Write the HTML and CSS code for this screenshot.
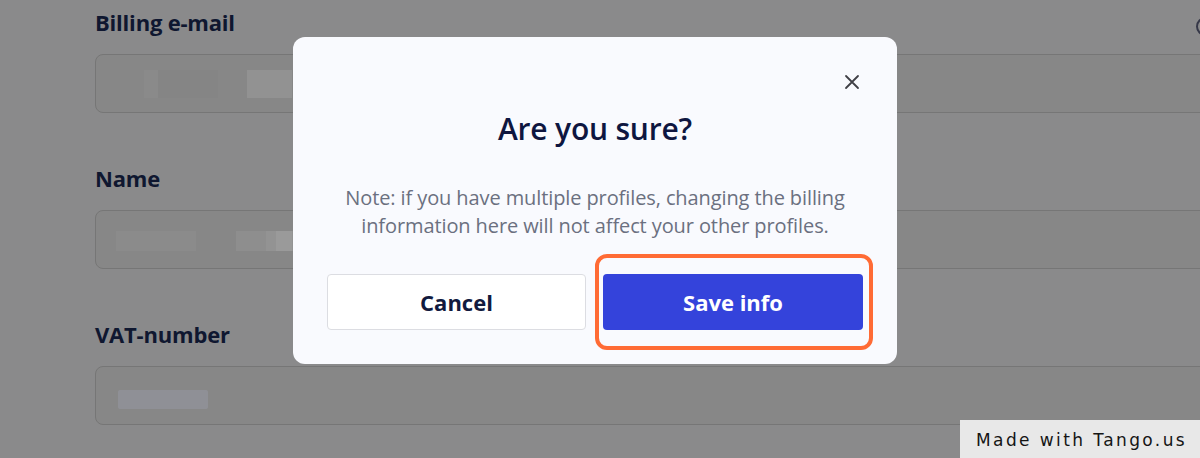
FILE: index.html
```html
<!DOCTYPE html>
<html lang="en">
<head>
<meta charset="utf-8">
<title>Billing info</title>
<link rel="stylesheet" href="styles.css">
</head>
<body>
<main class="page">
  <section class="field">
    <label class="label">Billing e-mail</label>
    <div class="input">
      <span class="blur b1"></span><span class="blur b2"></span><span class="blur b3"></span>
    </div>
  </section>
  <section class="field">
    <label class="label">Name</label>
    <div class="input">
      <span class="blur n1"></span><span class="blur n2"></span><span class="blur n3"></span><span class="blur n4"></span>
    </div>
  </section>
  <section class="field">
    <label class="label">VAT-number</label>
    <div class="input">
      <span class="blur v1"></span>
    </div>
  </section>
</main>
<span class="info-icon"></span>

<div class="modal" role="dialog">
  <button class="close" aria-label="Close">
    <svg width="16" height="16" viewBox="0 0 16 16"><path d="M2 2 L14 14 M14 2 L2 14" stroke="#404046" stroke-width="1.8" stroke-linecap="round"/></svg>
  </button>
  <h2 class="title">Are you sure?</h2>
  <p class="note">Note: if you have multiple profiles, changing the billing<br>information here will not affect your other profiles.</p>
  <div class="actions">
    <button class="btn btn-cancel">Cancel</button>
    <div class="highlight">
      <button class="btn btn-save">Save info</button>
    </div>
  </div>
</div>

<div class="tango">Made with Tango.us</div>
</body>
</html>
```

FILE: styles.css
```css
html, body {
  margin: 0;
  padding: 0;
}
body {
  width: 1200px;
  height: 458px;
  overflow: hidden;
  background: #8a8a8b;
  font-family: "Open Sans", "Noto Sans", sans-serif;
  position: relative;
}
.page {
  padding: 2px 0 0 95px;
  display: flex;
  flex-direction: column;
  gap: 45px;
}
.field {
  display: flex;
  flex-direction: column;
  gap: 12px;
}
.label {
  display: block;
  font-size: 22px;
  line-height: 40px;
  font-weight: 700;
  color: #0f1730;
  letter-spacing: -0.2px;
}
.input {
  box-sizing: border-box;
  height: 59px;
  width: 1140px;
  border: 1px solid #767676;
  border-radius: 8px;
  background: #878787;
  position: relative;
}
.blur {
  position: absolute;
  display: block;
}
.b1 { left: 48px; top: 15px; width: 14px; height: 28px; background: #8a8a8a; }
.b2 { left: 62px; top: 15px; width: 60px; height: 28px; background: #858585; }
.b3 { left: 151px; top: 15px; width: 45px; height: 28px; background: #929292; }
.n1 { left: 20px; top: 20px; width: 80px; height: 20px; background: #8b8b8b; }
.n2 { left: 140px; top: 20px; width: 30px; height: 20px; background: #8e8e8e; }
.n3 { left: 170px; top: 20px; width: 30px; height: 20px; background: #939393; }
.n4 { left: 180px; top: 20px; width: 16px; height: 20px; background: #9a9a9a; }
.v1 { left: 22px; top: 23px; width: 90px; height: 19px; background: #8f9096; border-radius: 2px; }

.info-icon {
  position: absolute;
  left: 1196px;
  top: 17px;
  width: 15px;
  height: 15px;
  border: 2px solid #363848;
  border-radius: 50%;
}

.modal {
  position: absolute;
  left: 293px;
  top: 37px;
  width: 604px;
  height: 327px;
  box-sizing: border-box;
  background: #f9fafe;
  border-radius: 12px;
  padding: 0 24px 0 34px;
  display: flex;
  flex-direction: column;
  align-items: center;
}
.close {
  position: absolute;
  right: 37px;
  top: 37px;
  width: 16px;
  height: 16px;
  padding: 0;
  border: 0;
  background: transparent;
  display: flex;
}
.title {
  margin: 73px 10px 0 0;
  font-size: 30px;
  line-height: 38px;
  font-weight: 600;
  color: #0e1640;
  letter-spacing: -0.2px;
}
.note {
  margin: 36px 10px 0 0;
  font-size: 20px;
  line-height: 28px;
  color: #6b7080;
  text-align: center;
  letter-spacing: -0.1px;
}
.actions {
  margin-top: 14px;
  width: 100%;
  display: flex;
  align-items: center;
  gap: 9px;
}
.btn {
  font-family: inherit;
  font-size: 22px;
  font-weight: 700;
  height: 56px;
  border-radius: 4px;
  cursor: pointer;
}
.btn-cancel {
  flex: 0 0 259px;
  background: #ffffff;
  border: 1px solid #dcdde2;
  color: #111a3e;
}
.highlight {
  flex: 0 0 278px;
  box-sizing: border-box;
  height: 96px;
  border: 4px solid #ff6b35;
  border-radius: 12px;
  padding: 0 6px 0 4px;
  display: flex;
  align-items: center;
}
.btn-save {
  width: 100%;
  background: #3443db;
  border: 0;
  color: #ffffff;
}

.tango {
  position: absolute;
  left: 960px;
  top: 420px;
  width: 240px;
  height: 38px;
  box-sizing: border-box;
  background: #e8e8e8;
  color: #151515;
  font-family: "DejaVu Sans", sans-serif;
  font-size: 17px;
  letter-spacing: 2.4px;
  line-height: 40px;
  padding-left: 16px;
}
```
